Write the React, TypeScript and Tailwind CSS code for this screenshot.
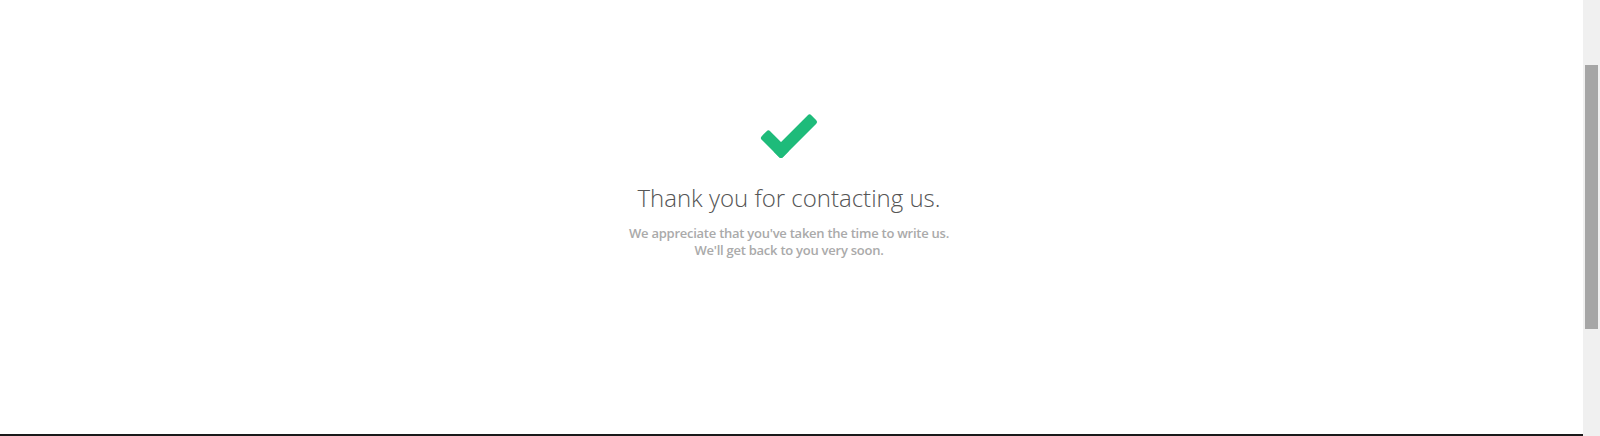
export default function App() {
  return (
    <div className="flex h-[436px] w-[1600px] overflow-hidden bg-white">
      <div className="flex h-full flex-1 flex-col border-b-2 border-[#1a1a1a]">
        <div className="flex flex-1 flex-col items-center pr-[5px] pt-[113px]">
          <svg width="60" height="47" viewBox="0 -1 60 47">
            <g transform="translate(22 36.5)" fill="#1ebb7a">
              <g transform="rotate(-45)">
                <rect x="-6" y="-6" width="52.4" height="12" rx="2.5" />
              </g>
              <g transform="rotate(-135)">
                <rect x="-6" y="-6" width="29.8" height="12" rx="2.5" />
              </g>
            </g>
          </svg>
          <h1 className="mt-[23px] font-['Open_Sans',sans-serif] text-[24px] font-light leading-[30px] text-[#555555]">
            Thank you for contacting us.
          </h1>
          <p className="mt-[12px] text-center font-['Open_Sans',sans-serif] text-[13px] font-semibold leading-[17px] tracking-[-0.25px] text-[#aaaaaa]">
            We appreciate that you've taken the time to write us.
            <br />
            We'll get back to you very soon.
          </p>
        </div>
      </div>
      <div className="flex h-full w-[17px] flex-col bg-[#f0f0f0] pl-[2px] pr-[2px] pt-[65px]">
        <div className="h-[264px] w-[13px] bg-[#a6a6a6]" />
      </div>
    </div>
  );
}
